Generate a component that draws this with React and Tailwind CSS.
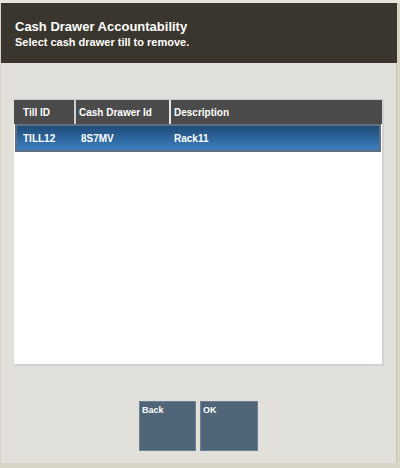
export default function App() {
  const rows = [{ till: 'TILL12', drawer: '8S7MV', desc: 'Rack11' }];

  return (
    <div
      className="w-[400px] h-[468px] bg-[#d9d5c6] flex flex-col overflow-hidden"
      style={{ fontFamily: '"Liberation Sans", Arial, sans-serif' }}
    >
      {/* Top strip */}
      <div className="h-[3px] bg-[#e6e4dc] shrink-0" />

      <div className="flex-1 flex flex-col pl-[1px] pr-[3px] pb-[5px]">
        {/* Header */}
        <div className="h-[60px] bg-[#3a362d] px-[14px] pt-[16px] text-white font-bold">
          <div className="text-[13px] leading-[16px]">Cash Drawer Accountability</div>
          <div className="text-[11px] leading-[14px]">Select cash drawer till to remove.</div>
        </div>

        {/* Body */}
        <div className="flex-1 bg-[#e1e0db] border-r border-[#c9c4b0] flex flex-col">
          <div className="mt-[36px] ml-[13px] w-[370px] h-[267px] bg-white border-b-2 border-r-2 border-[#cfd3d8] flex flex-col">
            {/* Table header */}
            <div className="h-[25px] bg-[#4b4b4b] flex text-white text-[10px] font-bold border-t border-[#c8c8c8]">
              <div className="w-[62px] pl-[9px] flex items-center border-r-2 border-[#d0d0d0]">Till ID</div>
              <div className="w-[95px] pl-[3px] flex items-center border-r-2 border-[#e8e8e8]">Cash Drawer Id</div>
              <div className="flex-1 pl-[3px] flex items-center">Description</div>
            </div>

            {/* Rows */}
            {rows.map((r) => (
              <div
                key={r.till}
                className="mx-[1px] h-[28px] flex items-center text-white text-[10px] font-bold border-2 border-[#5f6f80] bg-gradient-to-b from-[#1f4c79] to-[#3d80c2]"
              >
                <div className="w-[57px] pl-[6px]">{r.till}</div>
                <div className="w-[95px] pl-[7px]">{r.drawer}</div>
                <div className="flex-1 pl-[5px]">{r.desc}</div>
              </div>
            ))}
          </div>

          {/* Buttons */}
          <div className="mt-[35px] ml-[138px] flex gap-[4px]">
            <button className="w-[57px] h-[50px] bg-[#506578] border border-[#6d7f90] text-white text-[9px] font-bold text-left flex items-start pl-[2px] pt-[2px]">
              Back
            </button>
            <button className="w-[58px] h-[50px] bg-[#506578] border border-[#6d7f90] text-white text-[9px] font-bold text-left flex items-start pl-[2px] pt-[2px]">
              OK
            </button>
          </div>
        </div>
      </div>
    </div>
  );
}
